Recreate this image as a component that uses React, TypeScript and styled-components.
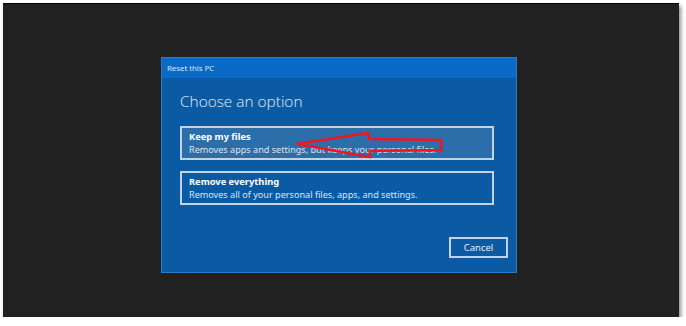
import React from 'react';
import styled, { createGlobalStyle } from 'styled-components';

const GlobalStyle = createGlobalStyle`
    html, body {
        margin: 0;
        padding: 0;
        background: #ffffff;
    }
    body {
        font-family: 'Noto Sans', 'Open Sans', Arial, sans-serif;
    }
`;

const Screen = styled.div`
    box-sizing: border-box;
    margin: 3px 0 0 3px;
    width: 676px;
    height: 314px;
    background: #212121;
    border-top: 1px solid #050505;
    box-shadow: 2px 3px 4px rgba(0, 0, 0, 0.45);
    padding: 53px 0 0 158px;
`;

const Dialog = styled.div`
    position: relative;
    box-sizing: border-box;
    width: 356px;
    height: 216px;
    border: 1px solid #2a7ccc;
    background: #0b5ba4;
    display: flex;
    flex-direction: column;
`;

const TitleBar = styled.div`
    height: 20px;
    background: #0a6ac6;
    color: #d8e6f4;
    font-size: 7.8px;
    line-height: 20px;
    padding-left: 5px;
`;

const Body = styled.div`
    flex: 1;
    display: flex;
    flex-direction: column;
    padding: 12px 8px 14px 18px;
`;

const Heading = styled.div`
    font-family: 'Open Sans', 'Noto Sans', sans-serif;
    font-weight: 300;
    font-size: 15.4px;
    color: #e2ebf5;
    line-height: 24px;
    margin-bottom: 12px;
`;

const OptionList = styled.div`
    display: flex;
    flex-direction: column;
    gap: 11px;
    width: 314px;
`;

const Option = styled.div<{ $active?: boolean }>`
    box-sizing: border-box;
    height: 34px;
    border: 2px solid #c3d3e3;
    background: ${(p) => (p.$active ? '#2c6ea9' : 'transparent')};
    padding: 2px 0 0 7px;
    color: #ffffff;
`;

const OptionTitle = styled.div`
    font-weight: 700;
    font-size: 9.3px;
    line-height: 13px;
`;

const OptionText = styled.div`
    font-size: 9.1px;
    line-height: 13px;
    color: #dbe5f0;
`;

const Footer = styled.div`
    margin-top: auto;
    display: flex;
    justify-content: flex-end;
`;

const CancelButton = styled.button`
    box-sizing: border-box;
    width: 59px;
    height: 21px;
    border: 2px solid #c3d3e3;
    background: transparent;
    color: #e6eef7;
    font-family: 'Noto Sans', 'Open Sans', sans-serif;
    font-size: 9.5px;
    padding: 0;
`;

const Arrow = styled.svg`
    position: absolute;
    left: 0;
    top: 0;
    pointer-events: none;
`;

export default function App() {
    return (
        <>
            <GlobalStyle />
            <Screen>
                <Dialog>
                    <TitleBar>Reset this PC</TitleBar>
                    <Body>
                        <Heading>Choose an option</Heading>
                        <OptionList>
                            <Option $active>
                                <OptionTitle>Keep my files</OptionTitle>
                                <OptionText>Removes apps and settings, but keeps your personal files.</OptionText>
                            </Option>
                            <Option>
                                <OptionTitle>Remove everything</OptionTitle>
                                <OptionText>Removes all of your personal files, apps, and settings.</OptionText>
                            </Option>
                        </OptionList>
                        <Footer>
                            <CancelButton>Cancel</CancelButton>
                        </Footer>
                    </Body>
                    {/* red annotation arrow, dialog-relative coords */}
                    <Arrow width='356' height='216' viewBox='0 0 356 216'>
                        <polygon
                            points='135,86 206,75 207,81 279,82 279,92 208,93 208,99'
                            fill='none'
                            stroke='#ee1620'
                            strokeWidth='2.6'
                            strokeLinejoin='miter'
                        />
                    </Arrow>
                </Dialog>
            </Screen>
        </>
    );
}
